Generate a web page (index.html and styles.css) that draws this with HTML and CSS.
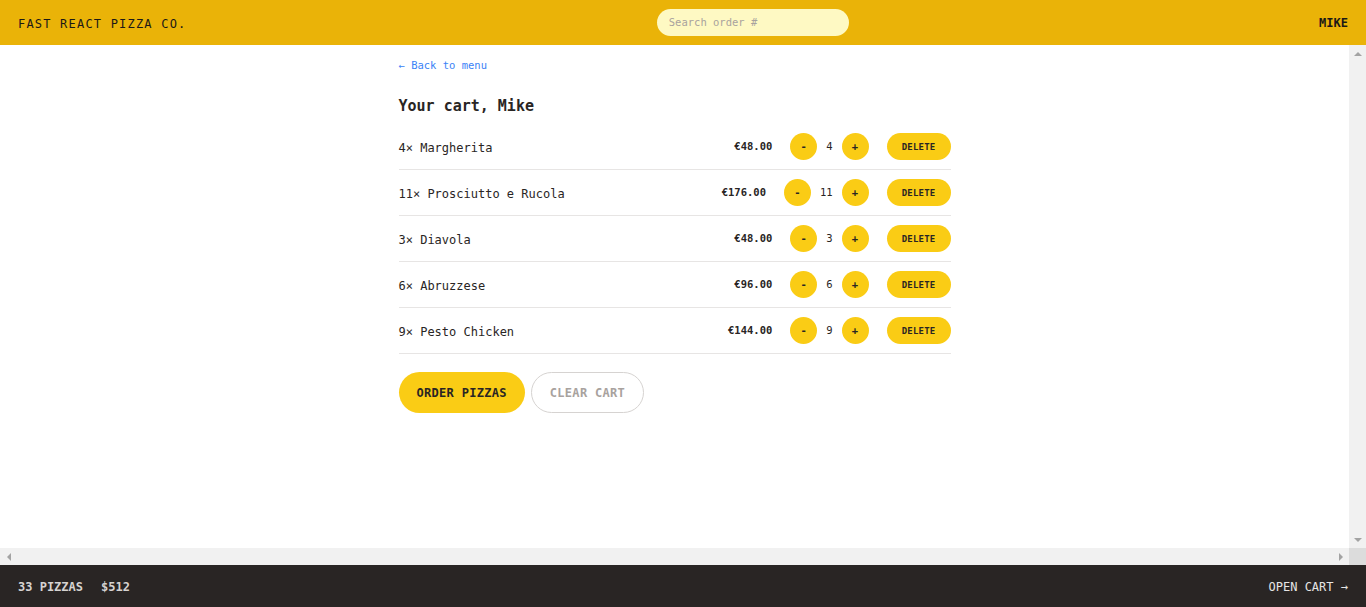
FILE: index.html
```html
<!DOCTYPE html>
<html lang="en">
<head>
<meta charset="utf-8">
<title>Fast React Pizza Co.</title>
<link rel="stylesheet" href="styles.css">
</head>
<body>
<div class="app">
  <header class="header">
    <a class="logo" href="#">Fast React Pizza Co.</a>
    <form class="search-form"><input class="search" type="text" placeholder="Search order #"></form>
    <div class="username">Mike</div>
  </header>

  <div class="viewport">
    <div class="scroller">
      <main class="main">
        <div class="cart">
          <a class="back" href="#">&larr; Back to menu</a>
          <h2 class="title">Your cart, Mike</h2>
          <ul class="items">
            <li class="item">
              <p class="name">4&times; Margherita</p>
              <div class="controls">
                <p class="price">€48.00</p>
                <div class="qty"><button class="round">-</button><span class="count">4</span><button class="round">+</button></div>
                <button class="small">Delete</button>
              </div>
            </li>
            <li class="item">
              <p class="name">11&times; Prosciutto e Rucola</p>
              <div class="controls">
                <p class="price">€176.00</p>
                <div class="qty"><button class="round">-</button><span class="count">11</span><button class="round">+</button></div>
                <button class="small">Delete</button>
              </div>
            </li>
            <li class="item">
              <p class="name">3&times; Diavola</p>
              <div class="controls">
                <p class="price">€48.00</p>
                <div class="qty"><button class="round">-</button><span class="count">3</span><button class="round">+</button></div>
                <button class="small">Delete</button>
              </div>
            </li>
            <li class="item">
              <p class="name">6&times; Abruzzese</p>
              <div class="controls">
                <p class="price">€96.00</p>
                <div class="qty"><button class="round">-</button><span class="count">6</span><button class="round">+</button></div>
                <button class="small">Delete</button>
              </div>
            </li>
            <li class="item">
              <p class="name">9&times; Pesto Chicken</p>
              <div class="controls">
                <p class="price">€144.00</p>
                <div class="qty"><button class="round">-</button><span class="count">9</span><button class="round">+</button></div>
                <button class="small">Delete</button>
              </div>
            </li>
          </ul>
          <div class="actions">
            <a class="primary" href="#">Order pizzas</a>
            <button class="secondary">Clear cart</button>
          </div>
        </div>
      </main>
    </div>
    <div class="vbar"><span class="arrow up"></span><span class="arrow down"></span></div>
    <div class="hbar"><span class="arrow left"></span><span class="arrow right"></span></div>
    <div class="corner"></div>
  </div>

  <footer class="footer">
    <p class="summary"><span>33 pizzas</span><span>$512</span></p>
    <a class="open-cart" href="#">Open cart &rarr;</a>
  </footer>
</div>
</body>
</html>
```

FILE: styles.css
```css
* { box-sizing: border-box; }

html, body {
  margin: 0;
  padding: 0;
  height: 100%;
}

body {
  font-family: "DejaVu Sans Mono", "Liberation Mono", monospace;
  font-size: 12px;
  line-height: 1.5;
  color: #292524;
  background: #fff;
}

p, h2, ul { margin: 0; padding: 0; }
a { color: inherit; text-decoration: none; }
button, input { font-family: inherit; }

.app {
  display: grid;
  grid-template-rows: auto 1fr auto;
  height: 100vh;
}

/* Header */
.header {
  display: flex;
  align-items: center;
  justify-content: space-between;
  padding: 9px 18px;
  background: #eab308;
  text-transform: uppercase;
}

.logo {
  padding-top: 2px;
  font-size: 12px;
  letter-spacing: 0.1em;
  color: #1c1917;
}

.search-form { margin: 0; display: flex; }

.search {
  width: 192px;
  height: 27px;
  border: 0;
  outline: none;
  border-radius: 999px;
  background: #fef9c3;
  padding: 0 12px 1px;
  font-size: 10.5px;
  color: #292524;
}

.search::placeholder { color: #a8a29e; }

.username {
  padding-top: 1px;
  font-size: 12px;
  font-weight: 600;
  color: #1c1917;
}

/* Scroll area with classic scrollbars */
.viewport {
  display: grid;
  grid-template-columns: 1fr 17px;
  grid-template-rows: 1fr 17px;
  min-height: 0;
}

.scroller {
  overflow: hidden;
  min-height: 0;
}

.vbar,
.hbar {
  display: flex;
  justify-content: space-between;
  align-items: center;
  background: #f1f1f1;
}

.vbar { flex-direction: column; }

.corner { background: #dcdcdc; }

.arrow {
  width: 17px;
  height: 17px;
  display: flex;
  align-items: center;
  justify-content: center;
}

.arrow::before {
  content: "";
  width: 0;
  height: 0;
  border-style: solid;
  border-color: transparent;
}

.up::before {
  border-width: 0 4px 4px 4px;
  border-bottom-color: #a3a3a3;
}

.down::before {
  border-width: 4px 4px 0 4px;
  border-top-color: #a3a3a3;
}

.left::before {
  border-width: 4px 4px 4px 0;
  border-right-color: #a3a3a3;
}

.right::before {
  border-width: 4px 0 4px 4px;
  border-left-color: #a3a3a3;
}

/* Cart */
.main {
  max-width: 576px;
  margin: 0 auto;
}

.cart {
  padding: 13px 12px 9px;
}

.back {
  display: block;
  width: max-content;
  font-size: 10.5px;
  line-height: 15px;
  color: #3b82f6;
}

.title {
  margin-top: 23px;
  font-size: 15px;
  line-height: 21px;
  font-weight: 700;
}

.items {
  list-style: none;
  margin-top: 7px;
}

.item {
  display: flex;
  align-items: center;
  justify-content: space-between;
  padding: 9px 0;
  border-bottom: 1px solid #e7e5e4;
}

.name {
  padding-top: 2px;
  font-size: 12px;
  line-height: 18px;
}

.controls {
  display: flex;
  align-items: center;
  gap: 18px;
}

.price {
  font-size: 10.5px;
  font-weight: 700;
}

.qty {
  display: flex;
  align-items: center;
  gap: 9px;
}

.count {
  font-size: 10.5px;
  font-weight: 500;
}

.round,
.small,
.primary {
  border: 0;
  border-radius: 999px;
  background: #facc15;
  color: #292524;
  font-weight: 600;
  text-transform: uppercase;
  letter-spacing: 0.025em;
  cursor: pointer;
}

.round {
  width: 27px;
  height: 27px;
  padding: 0;
  font-size: 10.5px;
  line-height: 15px;
  display: flex;
  align-items: center;
  justify-content: center;
}

.small {
  padding: 7.5px 15px;
  font-size: 9px;
  line-height: 12px;
}

.actions {
  margin-top: 18px;
  display: flex;
  gap: 6px;
}

.primary {
  display: inline-block;
  padding: 12px 18px 11px;
  font-size: 12px;
  line-height: 18px;
}

.secondary {
  display: inline-block;
  padding: 10.5px 18px;
  border: 1.5px solid #d6d3d1;
  border-radius: 999px;
  background: transparent;
  color: #a8a29e;
  font-size: 12px;
  line-height: 18px;
  font-weight: 600;
  text-transform: uppercase;
  letter-spacing: 0.025em;
}

/* Footer */
.footer {
  display: flex;
  align-items: center;
  justify-content: space-between;
  padding: 13px 18px 11px;
  background: #292524;
  color: #e7e5e4;
  text-transform: uppercase;
  font-size: 12px;
  line-height: 18px;
}

.summary {
  display: flex;
  gap: 18px;
  font-weight: 600;
  color: #d6d3d1;
}
```
